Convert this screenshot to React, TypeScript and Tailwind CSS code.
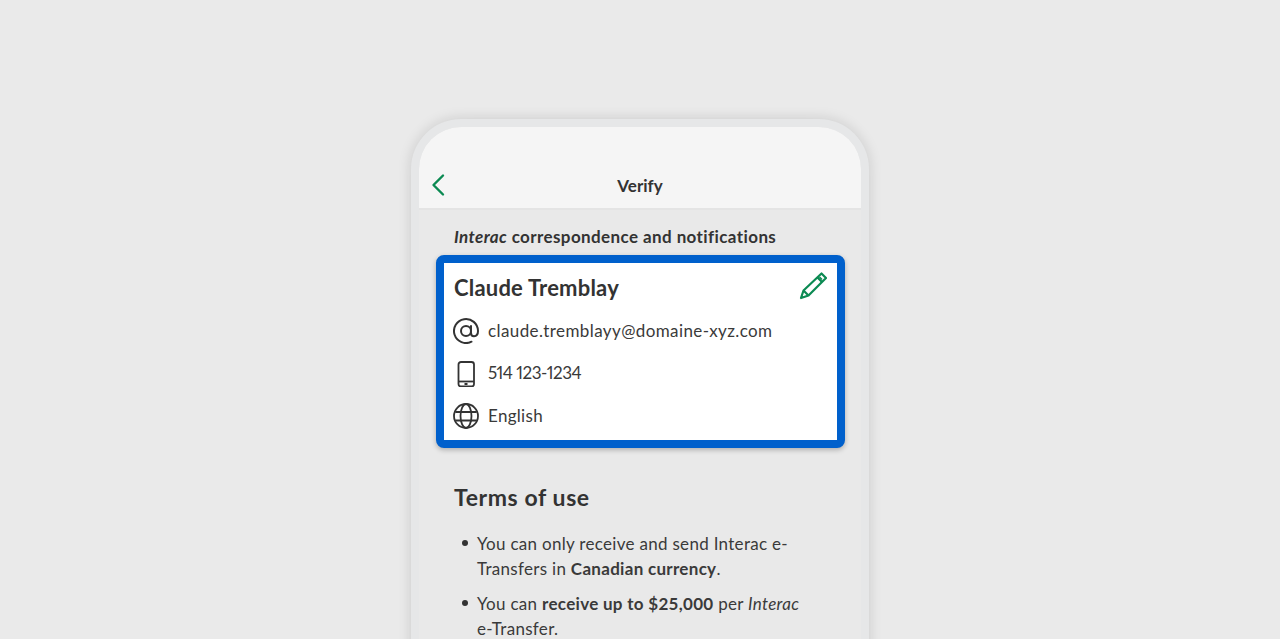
import React from "react";

function Row({ icon, tracking, children }: { icon: React.ReactNode; tracking: string; children: React.ReactNode }) {
  return (
    <div className="flex items-center h-[42.5px]">
      <div className="w-[35px] ml-[-1px] mt-[2px] flex justify-start">{icon}</div>
      <span className={`text-[17px] text-[#3a3a3a] ${tracking}`}>{children}</span>
    </div>
  );
}

function Bullet({ children }: { children: React.ReactNode }) {
  return (
    <li className="flex">
      <span className="w-[6px] h-[6px] mt-[9px] mr-[9px] shrink-0 rounded-full bg-[#333333]" />
      <span>{children}</span>
    </li>
  );
}

export default function App() {
  return (
    <div className="w-[1280px] h-[639px] overflow-hidden bg-[#eaeaea] flex justify-center pt-[119px] font-['Lato','Liberation_Sans',sans-serif]">
      <div className="w-[458px] h-[600px] shrink-0 rounded-t-[50px] border-[8px] border-b-0 border-[#e6e7e8] bg-[#e9e9e9] shadow-[0_0_14px_rgba(0,0,0,0.14)] overflow-hidden">
        <div className="h-[83px] bg-[#f5f5f5] border-b-2 border-[#e4e4e4] rounded-t-[42px] flex items-end pb-[11px] relative">
          <svg className="ml-[12px]" width="14" height="24" viewBox="0 0 14 24" fill="none">
            <path d="M12 2.5 L2.5 12 L12 21.5" stroke="#0b8a52" strokeWidth="2.4" strokeLinecap="round" strokeLinejoin="round" />
          </svg>
          <div className="absolute left-0 right-0 bottom-[11px] text-center text-[17px] font-bold text-[#333333] leading-[22px]">Verify</div>
        </div>
        <div className="pl-[17px] pr-[16px]">
          <p className="pl-[18px] pt-[15px] pb-[6px] text-[17px] leading-[24px] font-bold text-[#333333] tracking-[0.4px]">
            <i>Interac</i> correspondence and notifications
          </p>
          <div className="h-[193px] rounded-[8px] border-[8px] border-[#0060cc] bg-white shadow-[0_2px_5px_rgba(0,0,0,0.25)] pl-[10px] pr-[9px]">
            <div className="flex items-center justify-between h-[48px] mb-[-2px]">
              <span className="text-[22px] font-bold text-[#333333] tracking-[0.2px]">Claude Tremblay</span>
              <svg width="28" height="28" viewBox="0 0 28 28" fill="none" stroke="#0b8a52" strokeWidth="2.2" strokeLinejoin="round" className="mb-[3px] mr-[1px]">
                <path d="M2 26 L4.5 18.5 L22.5 1.5 L27 6 L9.5 23.5 Z" />
                <path d="M4.5 18.5 L9.5 23.5 M18.5 5.5 L23 10" />
                <path d="M20.5 5 L23 7.5" strokeWidth="1.6" />
              </svg>
            </div>
            <Row
              tracking="tracking-[0.4px]"
              icon={
                <svg width="26" height="26" viewBox="0 0 26 26" fill="none" stroke="#333333" strokeWidth="2">
                  <circle cx="13" cy="13" r="5" />
                  <path d="M18 8 V15 Q18 18.3 21 18.3 Q25 18 25 13 A12 12 0 1 0 18.5 23.7" strokeLinecap="round" />
                </svg>
              }
            >
              claude.tremblayy@domaine-xyz.com
            </Row>
            <Row
              tracking="tracking-[-0.5px] proportional-nums"
              icon={
                <svg width="26" height="26" viewBox="0 0 26 26" fill="none" stroke="#333333" strokeWidth="1.8">
                  <rect x="5.5" y="1" width="15.5" height="24.5" rx="2.5" />
                  <path d="M5.5 20.5 H21" />
                  <path d="M11.5 23 H14.5" strokeWidth="2" />
                </svg>
              }
            >
              514 123-1234
            </Row>
            <Row
              tracking="tracking-[0.3px]"
              icon={
                <svg width="26" height="26" viewBox="0 0 26 26" fill="none" stroke="#333333" strokeWidth="1.8">
                  <circle cx="13" cy="13" r="12" />
                  <ellipse cx="13" cy="13" rx="5.5" ry="12" />
                  <path d="M2.3 9 H23.7 M2.3 17.5 H23.7" />
                </svg>
              }
            >
              English
            </Row>
          </div>
          <div className="pl-[18px] pr-[16px] pt-[33px]">
            <h2 className="text-[23px] leading-[32px] font-bold text-[#333333] tracking-[0.6px]">Terms of use</h2>
            <ul className="mt-[18px] pl-[8px] text-[17px] leading-[25px] text-[#3a3a3a] tracking-[0.3px] flex flex-col gap-[10px]">
              <Bullet>You can only receive and send Interac e-<br />Transfers in <b>Canadian currency</b>.</Bullet>
              <Bullet>You can <b>receive up to $25,000</b> per <i>Interac</i><br />e-Transfer.</Bullet>
            </ul>
          </div>
        </div>
      </div>
    </div>
  );
}
